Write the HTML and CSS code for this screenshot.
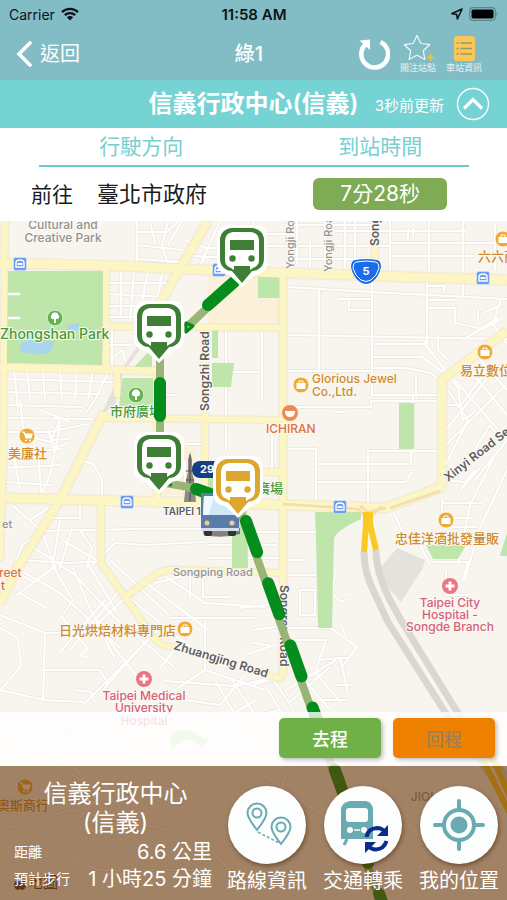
FILE: index.html
```html
<!DOCTYPE html>
<html lang="zh-Hant">
<head>
<meta charset="utf-8">
<meta name="viewport" content="width=device-width, initial-scale=1">
<title>綠1</title>
<link rel="stylesheet" href="styles.css">
</head>
<body>
<header class="top">
  <div class="status">
    <div class="status-side">
      <span>Carrier</span>
      <svg width="18" height="14" viewBox="0 0 18 14" aria-hidden="true"><path d="M1 5.2a11.5 11.5 0 0 1 16 0M3.8 8.2a7.5 7.5 0 0 1 10.4 0" fill="none" stroke="#0b1416" stroke-width="2.3"/><path d="M9 13.5 5.8 10.2a4.6 4.6 0 0 1 6.4 0z" fill="#0b1416"/></svg>
    </div>
    <strong class="clock">11:58 AM</strong>
    <div class="status-side status-end">
      <svg width="12" height="12" viewBox="0 0 12 12" aria-hidden="true"><path d="M11 1 1 5.6l4.6.8L6.400 11z" fill="none" stroke="#0b1416" stroke-width="1.6" stroke-linejoin="round"/></svg>
      <svg width="30" height="14" viewBox="0 0 30 14" aria-hidden="true"><rect x=".7" y=".7" width="25.600" height="12.600" rx="3.500" fill="none" stroke="#5c868c" stroke-width="1.200"/><rect x="2.500" y="2.500" width="22" height="9" rx="1.800" fill="#000"/><path d="M27.500 4.600q2 2.400 0 4.800z" fill="#5c868c"/></svg>
    </div>
  </div>
  <nav class="nav">
    <button class="back" type="button">
      <svg width="16" height="26" viewBox="0 0 16 26" aria-hidden="true"><path d="M14 2 3 13l11 11" fill="none" stroke="#fff" stroke-width="3.600" stroke-linecap="round"/></svg>
      <span>返回</span>
    </button>
    <h1 class="title">綠1</h1>
    <div class="tools">
      <button class="tool" type="button" aria-label="refresh">
        <svg width="32" height="32" viewBox="0 0 32 32" aria-hidden="true"><path d="M22.500 4A13.400 13.400 0 1 1 8.500 5.500" fill="none" stroke="#fff" stroke-width="4.600"/><path d="M1.500 2.500 12 1.500V12z" fill="#fff"/></svg>
      </button>
      <button class="tool" type="button">
        <svg width="32" height="28" viewBox="0 0 32 28" aria-hidden="true"><path d="m15 1.500 3.900 8 8.700 1.200-6.300 6.100 1.600 8.700L15 21.300l-7.900 4.200 1.600-8.700-6.300-6.100 8.700-1.200z" fill="none" stroke="#eefafa" stroke-width="1.200" stroke-linejoin="round"/><path d="M28.500 20v7M25 23.500h7" stroke="#f0bd55" stroke-width="2"/></svg>
        <span>關注站點</span>
      </button>
      <button class="tool" type="button">
        <svg width="22" height="28" viewBox="0 0 22 28" aria-hidden="true"><rect x="1" y="2" width="21" height="25" rx="3" fill="#fac858"/><g stroke="#8d9a66" stroke-width="1.700"><path d="M7.500 9h11.500M7.500 14.500h11.500M7.500 20h11.500"/><path d="M3.500 9h2M3.500 14.500h2M3.500 20h2"/></g></svg>
        <span>車站資訊</span>
      </button>
    </div>
  </nav>
</header>

<section class="banner">
  <h2 class="stop-name">信義行政中心(信義)</h2>
  <div class="banner-end">
    <span>3秒前更新</span>
    <button class="collapse" type="button" aria-label="collapse">
      <svg width="34" height="34" viewBox="0 0 34 34" aria-hidden="true"><circle cx="17" cy="17" r="15.500" fill="none" stroke="#fff" stroke-width="1.300"/><path d="m8 21.500 9-9 9 9" fill="none" stroke="#fff" stroke-width="3.200"/></svg>
    </button>
  </div>
</section>

<table class="arrivals">
  <thead>
    <tr><th class="col-way" scope="col"><span>行駛方向</span></th><th class="col-time" scope="col"><span>到站時間</span></th></tr>
  </thead>
  <tbody>
    <tr><td class="way"><span class="to">前往</span><span class="dest">臺北市政府</span></td><td class="time"><span class="badge">7分28秒</span></td></tr>
  </tbody>
</table>

<main class="map">
<svg class="map-art" viewBox="0 221 507 679" preserveAspectRatio="xMidYMid slice">
  <defs>
    <g id="minor">
      <path d="M137 221v44M137 245l45 5M137 232h30l12-11M150 221l5 22M168 221l-6 25 6 18M182 221l-14 24M137 259l45 3M185 240l20 8 25 0M195 256l35 2M220 221l-20 45"/>
      <path d="M108 283h65M108 294l60 3M108 306h50M108 317h27M121 272v45M134 272l-4 50M148 270l-10 55M163 270l-10 50M108 345h22M110 360l12-10 5 15M112 330v35"/>
      <path d="M4 379l110 3M5 392l95 2M14 370l4 40M27 370l3 28M43 370l2 30M60 370l2 28M77 370l-2 28M93 370l-5 30M108 372l-12 26-10 15M4 405l78 2M4 418l90 1M20 400l4 35 30 8M40 410l30 12M60 420l-9 20 18-1M4 432h44l40-8M5 455l55-6M5 468l55-3M14 455l6 35M38 450l3 42M60 425l-10 50-8 18M48 430l6 18 12-4M5 482l48 3M75 458l18 6 9 15v20"/>
      <path d="M12 505l30 26-20 14-10 28M30 520l18-12M42 531l95-2 65 0M48 518h32v-12M42 531l14 40M60 520l-8 50M72 528l-12 40M80 530l12 18-6 22M20 560l50 3 30-2M62 540l38 22M30 545l45 30 42 45 58 48M25 573l35 20 60 55M55 570l18 30-10 15M73 568l15 36 27 55M88 564l30 50M105 600l-45 52M120 590l-50 60M60 615l28 34-8 6 8 3M0 615l45 18 60 0M45 633l-2 68M0 628l18 10 3 28-21 25M0 690l45 10 38 2M42 670h58l8 14M75 690l16 2 4 10M82 706l78-78M18 592l30 17M12 570l22 12 22-16M34 582l-18 14M92 565l23-22 30 2 58-3M110 560l60 56M130 598l70 58M125 598l-30 28M145 582l62 47M165 576l40 27 60 4M155 583l26-6M105 635l35 46 40 46M150 637l-48 54M190 577v20M203 577v20h27M170 618h85M205 620l0 50M160 668l22-28 22 16M165 681l70 5 45-10M175 690l30-20 60 20M185 700l35 5 25-30M215 680l20 35M232 680l25 38"/>
      <path d="M0 720l80 8 60-20 60 20 80-18M30 740l70-5 40 25M190 720l60 30M0 757l90-8"/>
      <path d="M253 234h32M253 246h80M253 221l5 42M297 221v44M310 240v27M325 221v45M345 221v47M355 221v47M390 221v50M429 221v52M463 221v50M495 225v45M285 225h90M390 231h75M390 243h117M390 256h85M285 259h90M325 246h65M408 229v10M413 238v-10M335 231h55"/>
      <path d="M288 287l83 5 136 7M319 290v80M372 270v125M427 280v65M288 335l219 4M338 299h33M349 300v10h22M428 286h16v5M463 282v14M427 308h28v15l28 6 18-10M428 300h27M478 310v10M501 299l-8 25 14 20M483 313l18-8M463 340l35-22M427 339l-2 5 35 46M438 335v15l10 10M372 344h52M372 357h50l22 16M372 368h34l25 5 9 8M416 375v22M288 371h83M372 395h70M288 407h83v-6h71M335 412h10M413 395v58M286 449h30v52M316 464h95v-12M368 505v-54h72M316 482h90l6-10M440 451h-70M262 330v70M272 420v50"/>
      <path d="M448 390l20 30-25 50M455 380l52 60M470 370l37 45M480 360l27 30M446 405h15l30-40M446 430l40-50M446 445l60-60M458 390l5 30 12-8M465 465l25-40M490 425l12 15M495 455l-25 50-12 60M507 470l-28 60-14 50M442 500v25M442 503h40M442 518h30M452 527h25M394 513l10 22-10 10M404 535l30 12M433 562h35l-6 20M446 570v25h22M420 545l10 20M475 480l32-40M460 490l20-22M443 480l22 2 10-12"/>
      <path d="M226 330v120M157 395h20M230 372h28M186 444h20M185 461v40M286 532h30v-4M253 532h30M286 575h32M286 628h46M286 560h20M300 590h15v25h-15zM330 590l10 12 8-3M335 575l-8 50 30 22-15 20M345 635l-4-10M253 630l28-4M253 643l20 3M245 655l30-10M286 640h40l-10 30M320 660l20-2 8 35M350 658h-15M286 690l50-30M290 702l40-35M300 675l30 35M315 672l25 30M335 685h16M318 700h28M256 700l-25 15M240 608l35-4M207 545h70M207 558h75M253 685l20-6 20 30M268 690l15 25"/>
      <path d="M60 766l60 40-50 60M0 830l70-20 100 20M75 766l30 50M120 770l-50 60M40 850l60 20 100 0M210 770l60 50M290 766l-25 60M250 766l90 60M200 840l40 40M390 800l40 50-30 50M345 840l50 40"/>
    </g>
    <g id="major">
      <path d="M5 221 3 470 0 560M106 270v98M117 370v27M157 370v133M205 328v175M375 246v25M108 326l175 2M103 418l180 2M240 472h43M101 503v60l24 34 28 40q8 10 22 10M125 597l30-22q8-6 25-5l103 3M266 675l17 4" stroke-width="6"/>
      <path d="M283 274v402M0 367l157 4" stroke-width="7"/>
      <path d="M208 221 160 303M104 412 60 500 18 567 0 604M442 486v-106l65-49" stroke-width="8"/>
      <path d="M0 263l120 3 133 6 254 8M0 498l254 6 132 4 16-6 42-16" stroke-width="9"/>
    </g>
    <g id="pin">
      <path d="M-12-26h24Q25-26 25-13V11Q25 22 13 24L0 36-13 24Q-25 22-25 11V-13Q-25-26-12-26z" fill="#fff"/>
      <rect x="-22" y="-23" width="44" height="43" rx="12" fill="currentColor"/>
      <path d="M-9-19H9q8 1 8 9V9q0 6-6 8l-3 2H-8l-3-2q-6-2-6-8v-19q0-8 8-9z" fill="#fff"/>
      <path d="M-12-11h24V-1h-24zM-8 15H8v4h3L0 32-11 19h3z" fill="currentColor"/>
      <circle cx="-9.500" cy="7.500" r="3.200" fill="currentColor"/><circle cx="9.500" cy="7.500" r="3.200" fill="currentColor"/>
    </g>
    <g id="shop"><circle r="8" fill="#edaa36" stroke="#fff" stroke-width=".8"/><path d="M-4.500-2h9v6h-9z" fill="#fff"/><path d="M-2-2v-2h4v2" fill="none" stroke="#fff"/></g>
    <g id="cart"><circle r="8" fill="#edaa36" stroke="#fff" stroke-width=".8"/><path d="M-5-4h2l2 6h5l1-4h-7" fill="#fff" stroke="#fff" stroke-width="1.200"/><circle cx="-1" cy="4.500" r="1" fill="#fff"/><circle cx="3" cy="4.500" r="1" fill="#fff"/></g>
    <g id="tree"><circle r="7.800" fill="#62b350" stroke="#e6f6dc" stroke-width=".8"/><path d="M-1 5V1h-2a2.600 2.600 0 0 1-.5-4A3 3 0 0 1 0-5.500 3 3 0 0 1 3.500-3 2.600 2.600 0 0 1 3 1H1v4z" fill="#fff"/></g>
    <g id="clinic"><circle r="8" fill="#ec7585"/><path d="M0-4.500v9M-4.500 0h9" stroke="#fff" stroke-width="2.800"/></g>
    <g id="metro"><rect x="-6.500" y="-6.500" width="13" height="13" rx="2" fill="#6c9df0" stroke="#d3e2fa" stroke-width=".7"/><path d="M-4 3V-1q0-3 4-3t4 3v4z" fill="none" stroke="#fff" stroke-width="1.400"/><path d="M-2.500-1h5v2h-5z" fill="#fff"/></g>
  </defs>

  <rect y="221" width="507" height="679" fill="#f8f5ee"/>
  <path d="M208 276h72v50h-72zM158 445h38v50h-38z" fill="#fbf1da"/>
  <g fill="none" stroke-linejoin="round">
    <use href="#minor" stroke="#ebe6dd" stroke-width="3.400"/>
    <use href="#minor" stroke="#fff" stroke-width="2.200"/>
  </g>
  <g fill="#bfe6aa">
    <path d="M8 271h96l-2 94-96-2zM212 330h6v28h-6zM212 363h22l-3 24h-19zM122 378h31v30h-34zM152 348v19h-18zM258 275h22v23h-22zM399 403h15v46h-15zM232 500h15l1 68h-16zM208 470h12v20h-12z"/>
    <path d="M315 512h46v7q-26 12-27 20l-1 40-1 49h-14l-2-90zM426 545h40l-8 14h-25zM500 556l7-23v23zM172 735q10-7 20-4l16 10-6 8q-10-12-18-8-10 5-12 8-4-8 0-14z"/>
  </g>
  <path d="M22 342q8-4 18 0 8-3 14 0-2 11-10 12-12 1-22-2-4-5 0-10zM67 325l12-2v7l-12 1z" fill="#a9d5ee"/>
  <path d="M375 574l22-26 28 12-2 8-22 34zM138 345l15-14-30 42-8 32-14 10 22-48z" fill="#e4e2dd"/>
  <path d="M8 294h12M8 318h12" stroke="#fff" stroke-width="2.500"/>
  <g fill="none" stroke-linejoin="round">
    <g stroke="#fcf5c4" class="major"><use href="#major"/></g>
    <path d="M283 504l75 5 10 10M386 508l-18 4-8-6M368 520l14-14M390 508l50-17" stroke="#f6dcae" stroke-width="2.500"/>
    <path d="M364 552q0 20 10 40l14 30 57 90 50 70M376 550q0 22 14 50l12 22 54 88 60 80" stroke="#d9d7d0" stroke-width="7"/>
    <path d="M366 512v12l-2 28M370 512v12l6 26M483 760l26 52M491 755l20 44" stroke="#fbc926" stroke-width="6"/>
  </g>

  <g class="lbl">
    <g class="faint"><text class="mid" x="63" y="229">Cultural and</text><text class="mid" x="63" y="242">Creative Park</text>
      <text transform="translate(294 269) rotate(-90)">Yongji Road</text><text transform="translate(332 272) rotate(-90)">Yongji Road</text>
      <text x="173" y="576">Songping Road</text><text x="2" y="528">et</text><text class="mid" x="425" y="801">JIOU</text></g>
    <g class="road"><text transform="translate(379 246) rotate(-90)">Song</text><text transform="translate(209 411) rotate(-90)">Songzhi Road</text>
      <text transform="translate(448 482) rotate(-38)">Xinyi Road Sec. 5</text><text transform="translate(173 649) rotate(17)">Zhuangjing Road</text>
      <text transform="translate(280 585) rotate(90)">Songren Road</text><text class="small" x="163" y="515">TAIPEI 101</text></g>
    <g class="green"><text class="big" x="0" y="339">Zhongshan Park</text><text x="110" y="416">市府廣場</text><text x="257" y="493">廣場</text></g>
    <g class="gold"><text x="312" y="383">Glorious Jewel</text><text x="312" y="396">Co.,Ltd.</text>
      <g class="han"><text x="478" y="261">六六商</text><text x="460" y="375">易立數位</text>
      <text x="8" y="458">美廉社</text><text x="395" y="543">忠佳洋酒批發量販</text><text x="59" y="635">日光烘焙材料專門店</text><text x="-3" y="810">奧斯商行</text></g></g>
    <g class="orange"><text x="266" y="433">ICHIRAN</text><text x="-1" y="577">reet</text><text x="1" y="590">t</text></g>
    <g class="pink"><text x="144" y="700">Taipei Medical</text><text x="144" y="712">University</text><text x="144" y="725">Hospital</text>
      <text x="450" y="607">Taipei City</text><text x="450" y="619">Hospital -</text><text x="450" y="631">Songde Branch</text></g>
  </g>
  <use href="#tree" x="55" y="318"/><use href="#tree" x="136" y="395"/>
  <use href="#shop" x="301" y="385"/><use href="#shop" x="503" y="239"/><use href="#shop" x="485" y="352"/><use href="#shop" x="446" y="520"/><use href="#shop" x="185" y="629"/>
  <use href="#cart" x="27" y="436"/><use href="#cart" x="25" y="787"/>
  <circle cx="290" cy="413" r="8" fill="#ee8a55"/><path d="M285 411h10q0 6-5 6t-5-6z" fill="#fff"/>
  <use href="#clinic" x="144" y="679"/><use href="#clinic" x="450" y="586"/>
  <use href="#metro" x="20" y="264"/><use href="#metro" x="219" y="270"/><use href="#metro" x="483" y="278"/><use href="#metro" x="127" y="502"/><use href="#metro" x="340" y="507"/>
  <path d="M355 260q11-2 22 0 4 1 4 7-2 10-9 15-6 4-12 0-7-5-9-15 0-6 4-7z" fill="#1b6bea"/><path d="M356 262q10-2 20 0 3 1 3 6-2 8-8 12-5 3-10 0-6-4-8-12 0-5 3-6z" fill="none" stroke="#fff"/>
  <text class="shield" x="366" y="275">5</text>
  <path d="M188 460v12l-2 8-2 22h12l-2-22-2-8v-12l-2-8z" fill="#8d8984"/><path d="M186 480h8M185 490h10M186 471h7M190 455v46" stroke="#59554f" stroke-width="1.200"/>
  <rect x="192" y="461" width="34" height="17" rx="8" fill="#153f84"/><text class="shield" x="207" y="473">29</text>

  <g fill="none" stroke-linejoin="round">
    <path d="M242 275l-56 53M160 350v132l28 5 50 18 142 396" stroke="#98b577" stroke-width="8"/>
    <g stroke="#048d1c" stroke-width="12" stroke-linecap="round"><path d="M234 282l-26 23M160 383v33M196 489l14 5"/><path d="M246 521l140 392" stroke-dasharray="33 33"/></g>
    <path d="M186 323v9l7-6zM160 484l12 1" stroke="#048d1c" stroke-width="3"/>
  </g>
  <g color="#3f7f35"><use href="#pin" x="242" y="251"/><use href="#pin" x="159" y="327"/><use href="#pin" x="159" y="458"/></g>
  <g><path d="M202 528h38v6q-18 5-36 1z" fill="#444" opacity=".65"/><rect x="204" y="530" width="8" height="6" rx="2" fill="#333"/><rect x="228" y="530" width="8" height="6" rx="2" fill="#333"/>
    <path d="M201 493h38v38h-38z" fill="#597ca8"/><path d="M204 496h32l1 19h-34z" fill="#cfe9f8"/><path d="M204 496h10l-5 19h-6z" fill="#eef8fd"/><path d="M201 528h38v3h-38z" fill="#d6e0ec"/><circle cx="207" cy="523" r="2.500" fill="#f8ca91"/><circle cx="232" cy="523" r="2.500" fill="#f8ca91"/></g>
  <use href="#pin" x="238" y="482" color="#dda62f"/>
  <g fill="#474039"><path d="M23 880q-3-1-5 0-4 1-4 5 1 5 4 5l2-1 3 1q2-1 3-4-3-2 0-5-1-1-3-1zM19 879q0-3 3-4 0 3-3 4z"/><text class="brand" x="28" y="888">地圖</text></g>
</svg>

<div class="overlay">
  <div class="directions">
    <button class="dir go" type="button">去程</button>
    <button class="dir return" type="button">回程</button>
  </div>
  <div class="panel">
    <div class="info">
      <h3 class="info-name">信義行政中心<br>(信義)</h3>
      <dl class="facts">
        <div><dt>距離</dt><dd>6.6 公里</dd></div>
        <div><dt>預計步行</dt><dd>1 小時25 分鐘</dd></div>
      </dl>
    </div>
    <div class="actions">
      <button class="action" type="button">
        <span class="disc"><svg viewBox="0 0 78 78" aria-hidden="true"><g fill="none" stroke="#6aabb2" stroke-width="2"><path d="M29 44Q19.500 32 19.500 27a9.500 9.500 0 0 1 19 0Q38.500 32 29 44zM53 58Q43.500 46 43.500 41a9.500 9.500 0 0 1 19 0Q62.500 46 53 58z"/><circle cx="29" cy="27" r="4.500"/><circle cx="53" cy="41" r="4.500"/><path d="M30 46l21 11" stroke-dasharray="3 2" stroke-width="1.500"/></g></svg></span>
        <span>路線資訊</span>
      </button>
      <button class="action" type="button">
        <span class="disc"><svg viewBox="0 0 78 78" aria-hidden="true"><path d="M26 15h16q7 2 7 9v29H17V24q0-7 9-9z" fill="#6aabb2"/><rect x="22" y="22" width="22" height="14" rx="3" fill="#fcfdfd"/><circle cx="26" cy="44" r="3" fill="#fcfdfd"/><circle cx="40" cy="44" r="3" fill="#fcfdfd"/><path d="M30 44h6" stroke="#fcfdfd" stroke-width="1.500"/><path d="M23 53l-3 6" stroke="#6aabb2" stroke-width="3"/><g fill="none" stroke="#0b2c8c" stroke-width="4"><path d="M42.500 51Q44 42.500 53 42q5 0 8 4M62.500 55Q60 63 52 63.500q-5 0-8-4"/></g><path d="M64 39v11H53zM41 67V56h11z" fill="#0b2c8c"/></svg></span>
        <span>交通轉乘</span>
      </button>
      <button class="action" type="button">
        <span class="disc"><svg viewBox="0 0 78 78" aria-hidden="true"><circle cx="39" cy="39" r="15" fill="none" stroke="#6aabb2" stroke-width="4"/><circle cx="39" cy="39" r="8.500" fill="#6aabb2"/><path d="M39 15v9M39 54v9M15 39h9M54 39h9" stroke="#6aabb2" stroke-width="4" stroke-linecap="round"/></svg></span>
        <span>我的位置</span>
      </button>
    </div>
  </div>
</div>
</main>
</body>
</html>
```

FILE: styles.css
```css
* { box-sizing: border-box; }
body {
  margin: 0;
  min-height: 100vh;
  display: flex;
  flex-direction: column;
  font-family: "Inter", "Noto Sans CJK TC", sans-serif;
  color: #1b1b1b;
  background: #fff;
}
h1, h2, h3, dl, dd { margin: 0; }
button {
  margin: 0;
  padding: 0;
  border: 0;
  background: none;
  color: inherit;
  font: inherit;
}
svg { display: block; }

.top { background: #82bdc5; }
.status {
  display: grid;
  grid-template-columns: 1fr auto 1fr;
  align-items: center;
  height: 28px;
  padding: 0 8px 0 9px;
  font-size: 14px;
  color: #0b1416;
}
.status-side { display: flex; align-items: center; gap: 6px; }
.status-end { justify-content: flex-end; }
.clock { font-size: 15px; font-weight: 600; }

.nav {
  display: grid;
  grid-template-columns: 1fr auto 1fr;
  align-items: center;
  height: 52px;
  padding: 0 25px 0 16px;
  color: #fff;
}
.back { display: flex; align-items: center; gap: 8px; justify-self: start; font-size: 20px; line-height: 28px; }
.title { font-size: 20px; line-height: 28px; font-weight: 500; }
.tools { display: flex; align-items: center; justify-content: flex-end; gap: 10px; }
.tool { display: flex; flex-direction: column; align-items: center; }
.tool span { font-size: 9px; line-height: 12px; white-space: nowrap; color: #e2f1f3; }

.banner {
  display: grid;
  grid-template-columns: 1fr auto 1fr;
  align-items: center;
  height: 48px;
  padding: 0 17px;
  background: #76d3d4;
  color: #fff;
}
.stop-name { grid-column: 2; font-size: 24px; line-height: 32px; font-weight: 600; }
.banner-end { display: flex; align-items: center; justify-content: flex-end; gap: 12px; font-size: 15px; white-space: nowrap; }

.arrivals { width: 100%; border-spacing: 0; table-layout: fixed; font-size: 21px; line-height: 30px; }
.arrivals th, .arrivals td { padding: 0; font-weight: 400; }
.arrivals th { color: #76cfd1; }
.arrivals th span { display: block; padding-top: 4px; height: 39px; border-bottom: 2px solid #66cbd0; }
.col-way { width: 48%; }
.col-way span { margin-left: 39px; }
.arrivals .col-time span { margin-right: 38px; padding-left: 48px; }
.arrivals .way { height: 54px; padding-left: 31px; }
.to { margin-right: 24px; }
.dest { font-size: 22px; }
.arrivals .time { padding-left: 10px; text-align: center; }
.badge {
  display: inline-block;
  width: 134px;
  line-height: 32px;
  border-radius: 6px;
  background: #7eab53;
  color: #fff;
  vertical-align: middle;
}

.map {
  position: relative;
  flex: 1;
  display: flex;
  flex-direction: column;
  justify-content: flex-end;
  overflow: hidden;
}
.map-art { position: absolute; inset: 0; width: 100%; height: 100%; }
.major { filter: drop-shadow(0 0 1px #e6d5ae); }
.lbl text { font-size: 12px; font-weight: 500; paint-order: stroke; stroke: #fbf9f4; stroke-width: 2px; stroke-linejoin: round; }
.lbl .faint text { fill: #929292; font-size: 11px; }
.lbl .faint .mid { font-size: 12px; text-anchor: middle; }
.lbl .road text { fill: #5d5d5d; font-weight: 600; }
.lbl .road .small { font-size: 10px; }
.lbl .green text { fill: #469a38; font-size: 13px; }
.lbl .green .big { font-size: 14px; }
.lbl .gold text { fill: #cf8a2e; }
.lbl .han text { font-size: 13px; }
.lbl .orange text { fill: #db7041; }
.lbl .pink text { fill: #d5607a; text-anchor: middle; }
.shield { fill: #fff; font-size: 11px; font-weight: 700; text-anchor: middle; }
.brand { font-size: 15px; }

.overlay { position: relative; }
.directions {
  display: flex;
  justify-content: flex-end;
  gap: 12px;
  padding: 6px 12px 8px;
  background: rgba(255, 255, 255, .8);
}
.dir {
  width: 102px;
  height: 40px;
  border-radius: 5px;
  font-size: 18px;
  font-weight: 500;
  box-shadow: 2px 2px 4px rgba(0, 0, 0, .25);
}
.go { background: #6fb146; color: #fff; }
.return { background: #ee8200; color: #9b805a; }

.panel {
  display: flex;
  justify-content: space-between;
  height: 134px;
  padding: 0 8px 0 14px;
  background: rgba(105, 53, 8, .6);
  color: #fff;
}
.info { width: 198px; padding-top: 13px; }
.info-name { padding-left: 5px; font-size: 24px; line-height: 29px; font-weight: 400; text-align: center; }
.facts div { display: flex; justify-content: space-between; align-items: center; height: 27px; white-space: nowrap; }
.facts dt { font-size: 14px; }
.facts dd { font-size: 20px; }
.actions { display: flex; gap: 16px; padding-top: 20px; }
.action { display: flex; flex-direction: column; align-items: center; gap: 3px; width: 80px; font-size: 20px; line-height: 28px; white-space: nowrap; }
.disc { width: 78px; height: 78px; border-radius: 50%; background: #fcfdfd; box-shadow: 1px 2px 4px rgba(60, 30, 0, .5); }
```
